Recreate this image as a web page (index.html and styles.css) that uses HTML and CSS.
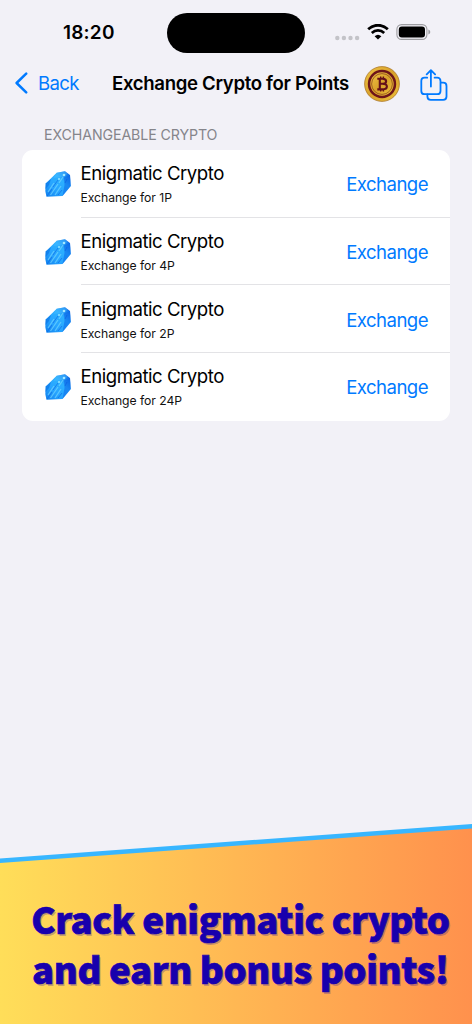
FILE: index.html
```html
<!DOCTYPE html>
<html lang="en">

<head>
    <meta charset="UTF-8">
    <meta name="viewport" content="width=device-width, initial-scale=1.0">
    <title>Exchange Crypto for Points</title>
    <link rel="stylesheet" href="styles.css">
</head>

<body>
    <!-- shared shapes -->
    <svg class="defs" width="0" height="0">
        <defs>
            <linearGradient id="gemFill" x1="0" y1="1" x2="1" y2="0">
                <stop offset="0" stop-color="#0f80ee" />
                <stop offset="0.35" stop-color="#27a4ff" />
                <stop offset="0.65" stop-color="#2cb0ff" />
                <stop offset="1" stop-color="#0757e0" />
            </linearGradient>
            <linearGradient id="gold" x1="0" y1="0" x2="1" y2="1">
                <stop offset="0" stop-color="#f0c545" />
                <stop offset="0.5" stop-color="#d8a12a" />
                <stop offset="1" stop-color="#ecc03c" />
            </linearGradient>
            <symbol id="gem" viewBox="0 0 26 26">
                <path d="M11.7 1.7 L20 .3 L25 4 L25.8 15 L17.5 25 L1.5 25.7 L.3 20 L.7 12.5 Z" fill="url(#gemFill)" />
                <path d="M19 6.5 L25 4 L25.8 15 L17.5 25 L19.5 14 Z" fill="#0760e6" opacity=".5" />
                <path d="M11.7 1.7 L20 .3 L22.5 3 L18 6 L8.5 7 Z" fill="#48bcff" opacity=".5" />
                <path d="M.7 12.5 L6 8 L4 14 L.4 18 Z" fill="#0870e3" opacity=".6" />
                <path d="M3 21 L9 12 M5.5 24 L13 13 M10 24 L16 15 M14 12 L18 6" stroke="#7bdcff" stroke-width="1.3" fill="none" opacity=".6" />
                <path d="M2 25 L7 18 M8 16 L13 9 M13 24 L17 19 M20 12 L22 8" stroke="#0756dc" stroke-width="1" fill="none" opacity=".5" />
                <circle cx="19" cy="4" r="1.3" fill="#a4e8ff" />
                <circle cx="14" cy="8" r="1" fill="#93e2ff" />
            </symbol>
        </defs>
    </svg>

    <div class="statusBar">
        <div class="time">18:20</div>
        <div class="island"></div>
        <svg class="dots" width="25" height="6" viewBox="0 0 25 6" fill="#c3c3c8">
            <circle cx="2.3" cy="3" r="2.2" />
            <circle cx="8.9" cy="3" r="2.2" />
            <circle cx="15.5" cy="3" r="2.2" />
            <circle cx="22.1" cy="3" r="2.2" />
        </svg>
        <svg class="wifi" width="22" height="16" viewBox="0 0 22 16" fill="none" stroke="#000">
            <path d="M1.2 5.2 C6.8 -.1 15.2 -.1 20.8 5.2" stroke-width="2.8" />
            <path d="M4.8 8.9 C8.4 5.6 13.6 5.6 17.2 8.9" stroke-width="2.7" />
            <path d="M7.6 12.2 Q11 9.2 14.4 12.2 L11 15.6 Z" fill="#000" stroke="none" />
        </svg>
        <svg class="battery" width="35" height="16" viewBox="0 0 35 16">
            <rect x=".9" y=".6" width="30" height="14.8" rx="4.7" fill="none" stroke="#9d9da1" stroke-width="1.1" />
            <rect x="2.8" y="2.4" width="26.2" height="11.2" rx="3" />
            <path d="M32.4 5.5 Q34.3 6.2 34.3 8 T32.4 10.5 Z" fill="#9d9da1" />
        </svg>
    </div>

    <div class="navBar">
        <a class="back">
            <svg width="13" height="22" viewBox="0 0 13 22">
                <path d="M11.2 1.7 L1.6 11 L11.2 20.3" fill="none" stroke="#007aff" stroke-width="2.5" stroke-linecap="round" stroke-linejoin="round" />
            </svg>
            <span>Back</span>
        </a>
        <h1>Exchange Crypto for Points</h1>
        <svg class="coin" width="36" height="36" viewBox="0 0 36 36">
            <circle cx="18" cy="18" r="17.4" fill="url(#gold)" stroke="#a36c1c" stroke-width=".7" />
            <circle cx="18" cy="18" r="14.2" fill="#6d1519" />
            <circle cx="18" cy="18" r="11.7" fill="url(#gold)" />
            <circle cx="18" cy="18" r="10.4" fill="none" stroke="#8f4a1c" stroke-width=".8" />
            <g fill="none" stroke="#641019" stroke-width="2.1">
                <path d="M13.3 12.7 H18.6 C23.3 12.7 23.3 17.8 18.6 17.8 H15.8 M18.6 17.8 C24.3 17.8 24.3 23.4 18.6 23.4 H13.3 M15.8 12.7 V23.4" />
                <path d="M16.7 10.5 V13 M19.4 10.5 V13 M16.7 23 V25.6 M19.4 23 V25.6" stroke-width="1.4" />
            </g>
        </svg>
        <svg class="share" width="28" height="32" viewBox="0 0 28 32" fill="none" stroke="#007aff" stroke-width="1.8" stroke-linecap="round" stroke-linejoin="round">
            <path d="M7.2 8.7 H4.6 Q1.3 8.7 1.3 12 V21.9 Q1.3 25.2 4.6 25.2 H17.2 Q20.5 25.2 20.5 21.9 V12 Q20.5 8.7 17.2 8.7 H14.6" />
            <path d="M10.9 17.6 V1.4 M6.7 5.4 L10.9 1.2 L15.1 5.4" />
            <path d="M21 13.6 H23.2 Q26.5 13.6 26.5 16.9 V27.5 Q26.5 30.8 23.2 30.8 H10.7 Q7.4 30.8 7.4 27.5 V25.5" />
        </svg>
    </div>

    <h2 class="sectionTitle">EXCHANGEABLE CRYPTO</h2>
    <div class="card">
        <div class="row">
            <svg class="gem"><use href="#gem" /></svg>
            <div class="content">
                <div>
                    <p class="name">Enigmatic Crypto</p>
                    <p class="price">Exchange for 1P</p>
                </div>
                <button type="button">Exchange</button>
            </div>
        </div>
        <div class="row">
            <svg class="gem"><use href="#gem" /></svg>
            <div class="content">
                <div>
                    <p class="name">Enigmatic Crypto</p>
                    <p class="price">Exchange for 4P</p>
                </div>
                <button type="button">Exchange</button>
            </div>
        </div>
        <div class="row">
            <svg class="gem"><use href="#gem" /></svg>
            <div class="content">
                <div>
                    <p class="name">Enigmatic Crypto</p>
                    <p class="price">Exchange for 2P</p>
                </div>
                <button type="button">Exchange</button>
            </div>
        </div>
        <div class="row">
            <svg class="gem"><use href="#gem" /></svg>
            <div class="content">
                <div>
                    <p class="name">Enigmatic Crypto</p>
                    <p class="price">Exchange for 24P</p>
                </div>
                <button type="button">Exchange</button>
            </div>
        </div>
    </div>

    <div class="promo">
        <div class="promoFill">
            <p>Crack enigmatic crypto</p>
            <p>and earn bonus points!</p>
        </div>
    </div>
</body>

</html>
```
FILE: styles.css
```css
* {
    box-sizing: border-box;
}

body {
    font-family: Inter, 'Liberation Sans', sans-serif;
    background-color: #f2f1f7;
    color: #000;
    margin: 0;
    height: 1024px;
    display: flex;
    flex-direction: column;
    overflow: hidden;
}

h1,
h2,
p {
    margin: 0;
}

svg {
    display: block;
    flex: none;
}

.defs {
    position: absolute;
}

.statusBar {
    height: 66px;
    display: flex;
    align-items: center;
    padding-left: 63px;
}

.time {
    width: 104px;
    padding-bottom: 1px;
    font-size: 19px;
    font-weight: 600;
    letter-spacing: 0.2px;
}

.island {
    width: 138px;
    height: 40px;
    border-radius: 20px;
    background-color: #000;
}

.dots {
    margin: 9px 0 0 30px;
}

.wifi {
    margin: 0 0 2px 7px;
}

.battery {
    margin: 0 0 2px 7px;
}

.navBar {
    height: 36px;
    display: flex;
    align-items: center;
    padding-left: 15px;
    font-size: 18.6px;
}

.back {
    width: 97px;
    padding-bottom: 2px;
    display: flex;
    align-items: center;
    gap: 10px;
    color: #007aff;
    letter-spacing: -0.7px;
}

h1 {
    width: 237px;
    padding-bottom: 2px;
    font-size: 18.6px;
    font-weight: 600;
    letter-spacing: -0.33px;
    white-space: nowrap;
}

.coin {
    margin-left: 15px;
}

.share {
    margin: 1px 0 0 19.5px;
}

.sectionTitle {
    margin: 23px 0 5px 44px;
    height: 20px;
    line-height: 20px;
    font-size: 14.2px;
    font-weight: 400;
    letter-spacing: -0.1px;
    color: #85858b;
}

.card {
    margin: 0 22px;
    height: 270.5px;
    background-color: #fff;
    border-radius: 11px;
    display: flex;
    flex-direction: column;
}

.row {
    flex: 1;
    display: flex;
    align-items: center;
    padding-left: 23px;
}

.gem {
    width: 26px;
    height: 26px;
    margin-top: 1px;
    margin-right: 9.5px;
}

.content {
    flex: 1;
    align-self: stretch;
    display: flex;
    align-items: center;
    justify-content: space-between;
    padding-top: 2px;
    padding-right: 22px;
    border-bottom: 1px solid #e3e3e6;
}

.row:last-child .content {
    border-bottom-color: transparent;
}

.name {
    font-size: 18.6px;
    line-height: 24px;
    letter-spacing: -0.48px;
}

.price {
    margin-top: 4px;
    font-size: 12.2px;
    line-height: 18px;
    letter-spacing: -0.05px;
    color: #111;
}

button {
    padding: 0;
    border: none;
    background: none;
    font-family: inherit;
    font-size: 18.6px;
    letter-spacing: -0.55px;
    color: #007aff;
    cursor: pointer;
}

.promo {
    margin-top: auto;
    height: 200px;
    background-color: #38b6ff;
    clip-path: polygon(0 34.5px, 100% 0, 100% 100%, 0 100%);
}

.promoFill {
    height: 100%;
    padding-top: 70px;
    padding-left: 9px;
    background: linear-gradient(90deg, #ffde59, #ff914d);
    clip-path: polygon(0 39px, 100% 4.5px, 100% 100%, 0 100%);
    text-align: center;
    white-space: nowrap;
}

.promoFill p {
    font-family: 'Noto Sans CJK JP', 'Noto Sans', sans-serif;
    font-size: 36.5px;
    font-weight: 900;
    line-height: 49.5px;
    letter-spacing: -0.38px;
    color: #1800ad;
    -webkit-text-stroke: 0.7px #1800ad;
    text-shadow: 1.5px 1.5px 0.5px rgba(24, 0, 173, 0.25);
}
```
